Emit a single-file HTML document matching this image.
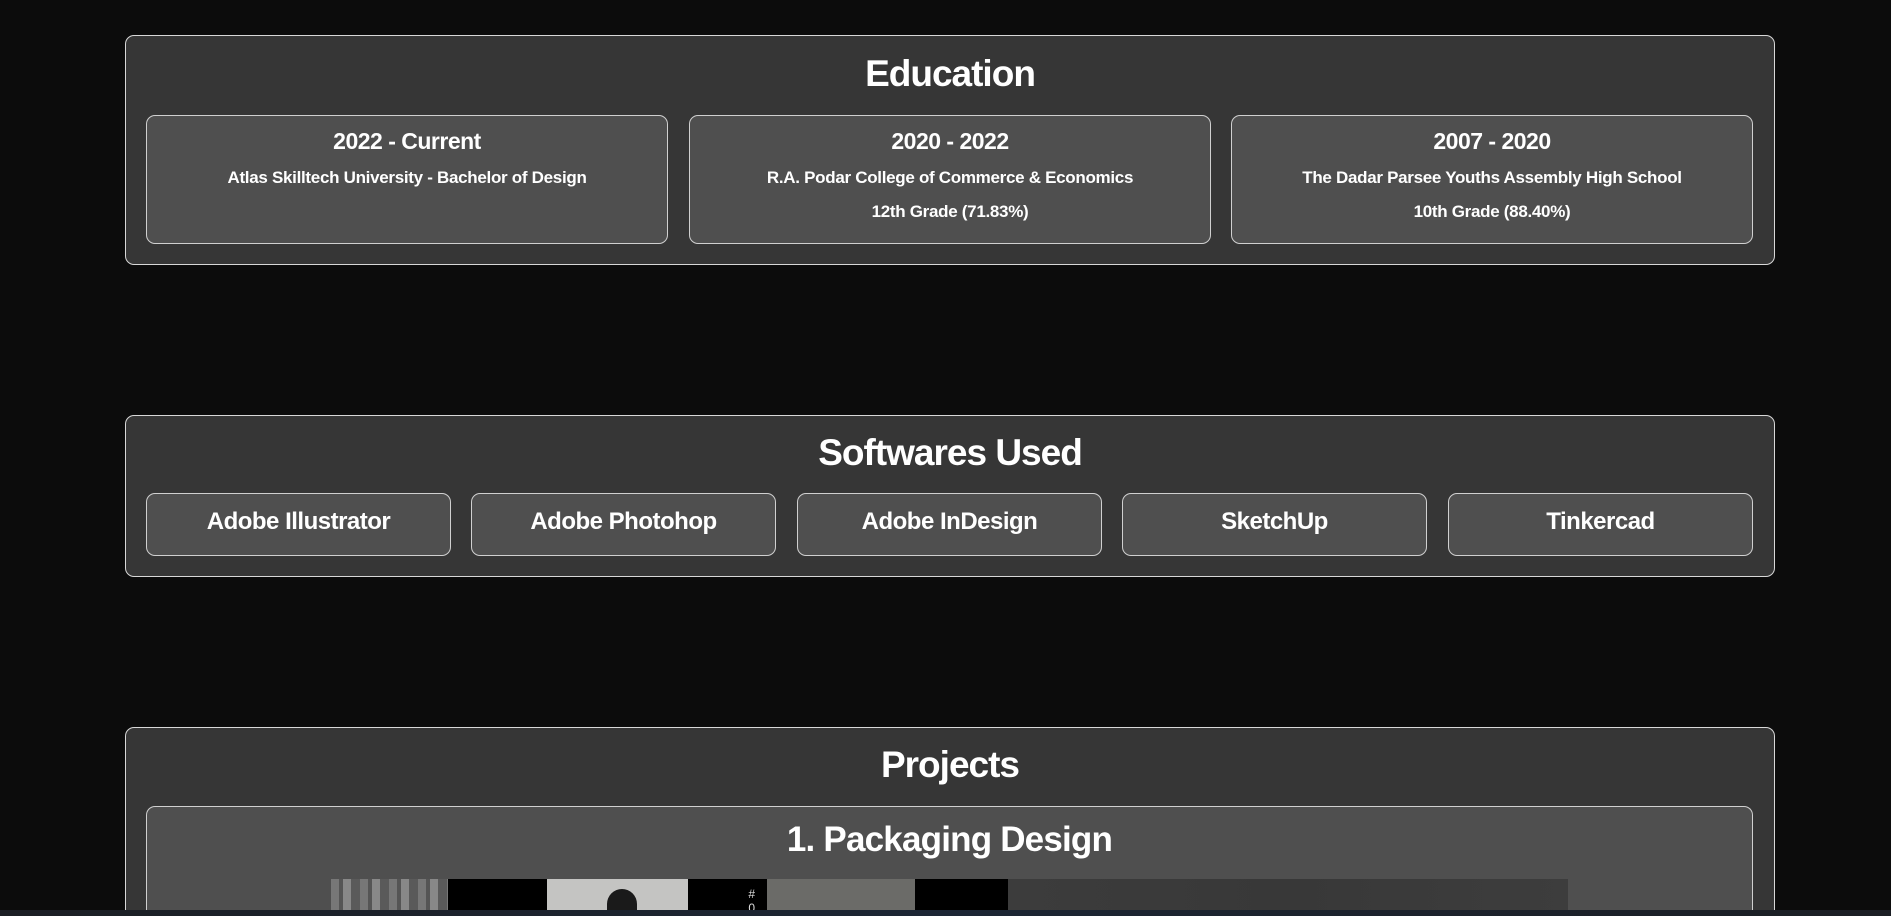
<!DOCTYPE html>
<html><head><meta charset="utf-8">
<style>
*{margin:0;padding:0;box-sizing:border-box}
html,body{width:1891px;height:916px;overflow:hidden;background:#0c0c0c;font-family:"Liberation Sans","DejaVu Sans",sans-serif;color:#fff;position:relative}
.box{position:absolute;left:125px;width:1650px;background:#363636;border:1.5px solid #d8d8d8;border-radius:9px;overflow:hidden}
.card{position:absolute;background:#4f4f4f;border:1.5px solid #d0d0d0;border-radius:9px;text-align:center;overflow:hidden}
h2{position:absolute;left:0;right:0;text-align:center;font-size:37px;font-weight:bold;letter-spacing:-1px}
.t{font-size:23px;font-weight:bold;margin-top:12px;letter-spacing:-0.5px}
.s{font-size:17px;font-weight:bold;margin-top:13px;letter-spacing:-0.3px}
.s2{font-size:17px;font-weight:bold;margin-top:14px;letter-spacing:-0.3px}
.btn{position:absolute;top:77px;width:305px;height:63px;background:#4f4f4f;border:1.5px solid #d0d0d0;border-radius:9px;font-size:24px;font-weight:bold;text-align:center;line-height:56px;letter-spacing:-0.5px}
</style></head><body>

<div class="box" style="top:35px;height:230px">
  <h2 style="top:17px">Education</h2>
  <div class="card" style="left:20px;top:79px;width:522px;height:129px">
    <div class="t">2022 - Current</div>
    <div class="s">Atlas Skilltech University - Bachelor of Design</div>
  </div>
  <div class="card" style="left:563px;top:79px;width:522px;height:129px">
    <div class="t">2020 - 2022</div>
    <div class="s">R.A. Podar College of Commerce &amp; Economics</div>
    <div class="s2">12th Grade (71.83%)</div>
  </div>
  <div class="card" style="left:1105px;top:79px;width:522px;height:129px">
    <div class="t">2007 - 2020</div>
    <div class="s">The Dadar Parsee Youths Assembly High School</div>
    <div class="s2">10th Grade (88.40%)</div>
  </div>
</div>

<div class="box" style="top:415px;height:162px">
  <h2 style="top:16px">Softwares Used</h2>
  <div class="btn" style="left:20px">Adobe Illustrator</div>
  <div class="btn" style="left:345px">Adobe Photohop</div>
  <div class="btn" style="left:671px">Adobe InDesign</div>
  <div class="btn" style="left:996px">SketchUp</div>
  <div class="btn" style="left:1322px">Tinkercad</div>
</div>

<div class="box" style="top:727px;height:189px;border-bottom:none;border-radius:9px 9px 0 0">
  <h2 style="top:16px">Projects</h2>
  <div class="card" style="left:20px;top:78px;width:1607px;height:111px;border-bottom:none;border-radius:9px 9px 0 0">
    <div style="font-size:35px;font-weight:bold;margin-top:13px;letter-spacing:-0.8px">1. Packaging Design</div>
    <div style="position:absolute;left:184px;top:72px;width:1237px;height:60px;background:#3a3a3a">
      <div style="position:absolute;left:0;top:0;width:117px;height:60px;background:repeating-linear-gradient(90deg,#777 0 8px,#555 8px 12px,#888 12px 20px,#5a5a5a 20px 29px)"></div>
      <div style="position:absolute;left:117px;top:0;width:99px;height:60px;background:#000"></div>
      <div style="position:absolute;left:216px;top:0;width:141px;height:60px;background:#c4c4c2"><div style="position:absolute;left:60px;top:10px;width:30px;height:50px;border-radius:15px 15px 0 0;background:#1a1a1a"></div></div>
      <div style="position:absolute;left:357px;top:0;width:79px;height:60px;background:#000;color:#ddd;font-size:12px;text-align:right;padding:8px 12px 0 0">#<br>0</div>
      <div style="position:absolute;left:436px;top:0;width:148px;height:60px;background:#6b6b68"></div>
      <div style="position:absolute;left:584px;top:0;width:93px;height:60px;background:#000"></div>
      <div style="position:absolute;left:677px;top:0;width:560px;height:60px;background:linear-gradient(90deg,#3c3c3c,#383838 50%,#3d3d3d)"></div>
    </div>
  </div>
</div>

<div style="position:absolute;left:0;top:910px;width:1891px;height:6px;background:linear-gradient(90deg,#1b1e24,#1c2634 50%,#1b1e24)"></div>
</body></html>
